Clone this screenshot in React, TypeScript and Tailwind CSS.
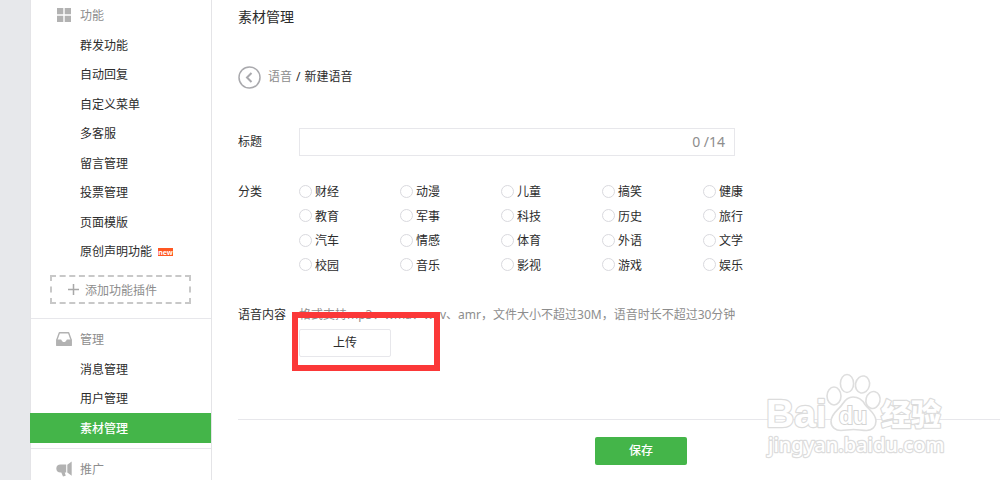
import type { ReactNode } from "react";

const featureLinks = [
  "群发功能",
  "自动回复",
  "自定义菜单",
  "多客服",
  "留言管理",
  "投票管理",
  "页面模版",
  "原创声明功能",
];
const manageLinks = ["消息管理", "用户管理", "素材管理"];
const categories = [
  "财经", "动漫", "儿童", "搞笑", "健康",
  "教育", "军事", "科技", "历史", "旅行",
  "汽车", "情感", "体育", "外语", "文学",
  "校园", "音乐", "影视", "游戏", "娱乐",
];

function GridIcon() {
  return (
    <svg width="16" height="16" viewBox="0 0 16 16" fill="#b2b2b2" aria-hidden="true">
      <path d="M1 1h6.300v6.300H1zM8.700 1H15v6.300H8.700zM1 8.700h6.300V15H1zM8.700 8.700H15V15H8.700z" />
    </svg>
  );
}

function TrayIcon() {
  return (
    <svg width="16" height="16" viewBox="0 0 16 16" aria-hidden="true">
      <path d="M3.4 1.8h9.2L15.2 9v5.2H.8V9z" fill="none" stroke="#b2b2b2" strokeWidth="1.4" strokeLinejoin="round" />
      <path d="M.5 8.6h4.2c.6 0 .8.4 1 1 .3.9 1.100 1.500 2.300 1.500s2-.6 2.300-1.500c.2-.6.4-1 1-1h4.200V15H.5z" fill="#b2b2b2" />
    </svg>
  );
}

function HornIcon() {
  return (
    <svg width="16" height="16" viewBox="0 0 16 16" fill="#b2b2b2" aria-hidden="true">
      <path d="M4.500 3.500h5.700v8H8.800l.9 3.300-2.700.6-1.700-3.900h-.8C2 11.500.3 9.900.3 7.500s1.700-4 4.200-4z" />
      <path d="M11.300 3.700 15.700.5v14.300l-4.400-3.300z" />
    </svg>
  );
}

function MenuHeading({ icon, children }: { icon: ReactNode; children: ReactNode }) {
  return (
    <h2 className="flex h-[30px] items-center gap-2 pl-[25px] text-[#8d8d8d]">
      {icon}
      <span className="pt-0.5">{children}</span>
    </h2>
  );
}

function Watermark() {
  return (
    <svg
      className="pointer-events-none absolute right-[46px] bottom-[16px]"
      width="192"
      height="96"
      viewBox="0 0 192 96"
      aria-hidden="true"
    >
      <g fill="#fff" stroke="#dcdcdc" strokeWidth="2.4" paintOrder="stroke" strokeLinejoin="round">
        <text x="4" y="59" fontSize="39" fontWeight="700" fontFamily="Liberation Sans, sans-serif">
          Bai
        </text>
        <text x="119" y="57" fontSize="30" fontWeight="900" fontFamily="Noto Sans CJK SC, sans-serif">
          经验
        </text>
        <text x="6" y="84" fontSize="20" fontWeight="500" fontFamily="Noto Sans, sans-serif">
          jingyan.baidu.com
        </text>
      </g>
      <g fill="#fff" stroke="#dedede" strokeWidth="1.600">
        <ellipse cx="72" cy="28" rx="7" ry="9" />
        <ellipse cx="85" cy="15.500" rx="6.600" ry="9" />
        <ellipse cx="100.500" cy="16.500" rx="7" ry="8.600" transform="rotate(12 100.500 16.500)" />
        <ellipse cx="111" cy="32" rx="7" ry="8.600" transform="rotate(14 111 32)" />
        <path d="M91 29c-5.500 0-8 3-10.500 7C77 42 69 45 69 53.500 69 59 73.500 62.500 79 62.500c4 0 8-1 12.500-1s8.500 1 13 1c6 0 9.500-4 9.500-9.500 0-7.500-7-11-11-16.500C100.500 32 97 29 91 29z" />
      </g>
      <text x="77" y="56" fontSize="23" fontWeight="700" fontFamily="Liberation Sans, sans-serif" fill="#fff" stroke="#d4d4d4" strokeWidth="2" paintOrder="stroke">
        du
      </text>
    </svg>
  );
}

export default function App() {
  return (
    <div className="relative flex h-screen overflow-hidden bg-[#e7e8eb] pl-[30px] font-['Noto_Sans','Noto_Sans_CJK_SC',sans-serif] text-xs text-[#2c2c2c]">
      <nav className="w-[182px] shrink-0 border-x border-[#e4e4e7] bg-white">
        <section className="pb-[14px]">
          <MenuHeading icon={<GridIcon />}>功能</MenuHeading>
          <ul className="grid h-[236px] auto-rows-fr">
            {featureLinks.map((label) => (
              <li key={label}>
                <a href="#" className="flex h-full items-center gap-[6px] pt-0.5 pl-[49px]">
                  {label}
                  {label === "原创声明功能" && (
                    <span className="flex h-2 w-[15px] items-center justify-center bg-[#ff5722] text-[7px] font-bold text-white">
                      new
                    </span>
                  )}
                </a>
              </li>
            ))}
          </ul>
          <button
            type="button"
            className="mt-[9px] ml-[19px] flex h-[29px] w-[141px] items-center gap-[6px] border-2 border-dashed border-[#c8c8c8] pl-4 text-[#8d8d8d]"
          >
            <svg width="11" height="11" viewBox="0 0 11 11" stroke="#a8a8a8" strokeWidth="1.500" aria-hidden="true">
              <path d="M5.500 0v11M0 5.500h11" />
            </svg>
            <span className="pt-0.5">添加功能插件</span>
          </button>
        </section>

        <section className="border-t border-[#e7e7eb] py-[5px]">
          <MenuHeading icon={<TrayIcon />}>管理</MenuHeading>
          <ul className="grid h-[89px] auto-rows-fr">
            {manageLinks.map((label) => (
              <li key={label}>
                <a
                  href="#"
                  className={`-ml-px flex h-full items-center pt-0.5 pl-[50px] ${
                    label === "素材管理" ? "bg-[#44b549] font-medium text-white" : ""
                  }`}
                >
                  {label}
                </a>
              </li>
            ))}
          </ul>
        </section>

        <section className="border-t border-[#e7e7eb] pt-[5px]">
          <MenuHeading icon={<HornIcon />}>推广</MenuHeading>
        </section>
      </nav>

      <main className="min-w-0 flex-1 bg-white pl-[26px]">
        <h1 className="pt-[7px] text-sm leading-5">素材管理</h1>

        <div className="mt-[38px] flex h-6 items-center">
          <a href="#" aria-label="返回" className="mr-[7px]">
            <svg width="23" height="23" viewBox="0 0 23 23" fill="none" stroke="#a9a9ad" aria-hidden="true">
              <circle cx="11.500" cy="11.500" r="10.500" strokeWidth="1.500" />
              <path d="M13.500 7 9 11.500l4.500 4.500" strokeWidth="2" />
            </svg>
          </a>
          <a href="#" className="text-[#8d8d8d]">语音</a>
          <span className="mx-1">/</span>
          <span>新建语音</span>
        </div>

        <form onSubmit={(event) => event.preventDefault()}>
          <div className="mt-[39px] flex items-center">
            <label htmlFor="title" className="w-[61px]">标题</label>
            <div className="flex h-7 w-[436px] items-center border border-[#e7e7eb] pr-[9px]">
              <input
                id="title"
                type="text"
                maxLength={14}
                className="h-full min-w-0 flex-1 px-2 outline-none"
              />
              <span className="text-sm text-[#8d8d8d]">0 /14</span>
            </div>
          </div>

          <fieldset className="mt-[23px] flex">
            <legend className="float-left w-[61px] pt-px leading-6">分类</legend>
            <div className="grid h-[98px] grid-cols-[repeat(5,101px)] auto-rows-fr">
              {categories.map((name) => (
                <label key={name} className="flex items-center gap-[3px]">
                  <input
                    type="radio"
                    name="category"
                    value={name}
                    className="size-[13px] appearance-none rounded-full border border-[#d9d9de] bg-white checked:bg-[#44b549]"
                  />
                  <span className="pt-0.5">{name}</span>
                </label>
              ))}
            </div>
          </fieldset>

          <div className="mt-[26px] flex">
            <label htmlFor="upload" className="w-[61px] pt-px leading-[22px]">语音内容</label>
            <div className="relative">
              <p className="pt-px leading-[22px] whitespace-nowrap text-[#8d8d8d]">
                格式支持mp3、wma、wav、amr，文件大小不超过30M，语音时长不超过30分钟
              </p>
              <button
                id="upload"
                type="button"
                className="mt-[3px] block h-7 w-[92px] rounded-xs border border-[#e7e7eb]"
              >
                上传
              </button>
              <div className="pointer-events-none absolute top-[9px] left-[-7px] h-[59px] w-[148px] border-6 border-[#fb3838]" />
            </div>
          </div>

          <div className="mt-[62px] flex justify-center border-t border-[#e7e7eb] pt-[17px] pl-11">
            <button
              type="submit"
              className="h-7 w-[92px] rounded-xs bg-[#44b549] font-medium text-white"
            >
              保存
            </button>
          </div>
        </form>
      </main>

      <Watermark />
    </div>
  );
}
